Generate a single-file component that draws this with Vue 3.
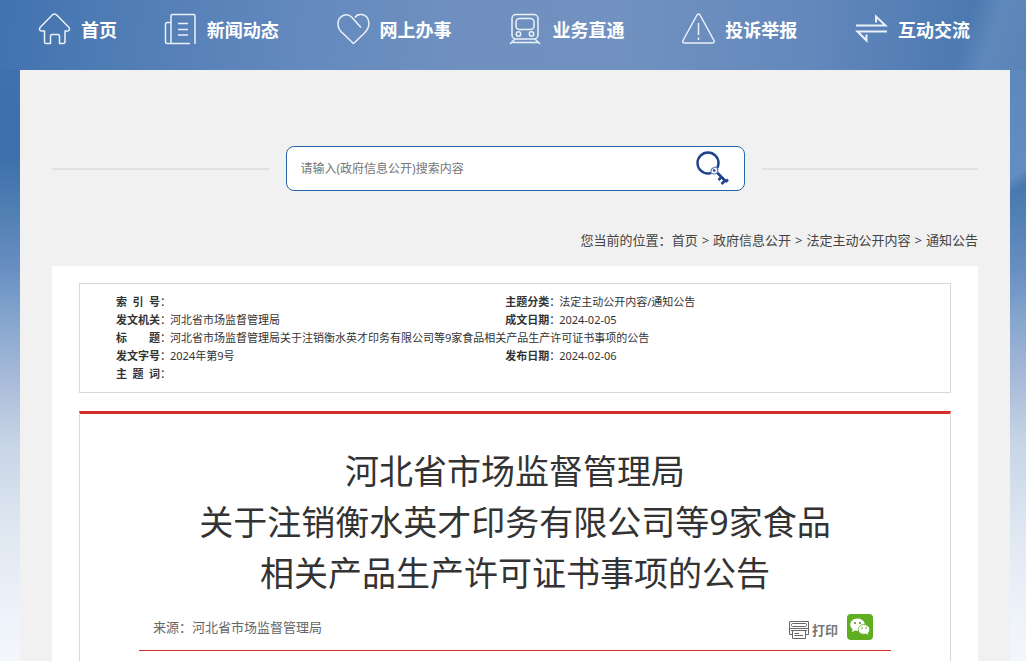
<script setup>
import { ref } from 'vue'

const keyword = ref('')

const nav = [
  { name: 'home', label: '首页' },
  { name: 'news', label: '新闻动态' },
  { name: 'service', label: '网上办事' },
  { name: 'business', label: '业务直通' },
  { name: 'report', label: '投诉举报' },
  { name: 'exchange', label: '互动交流' },
]

const crumbs = ['首页', '政府信息公开', '法定主动公开内容', '通知公告']

const meta = [
  [{ label: '索引号', value: '' }, { label: '主题分类', value: '法定主动公开内容/通知公告' }],
  [{ label: '发文机关', value: '河北省市场监督管理局' }, { label: '成文日期', value: '2024-02-05' }],
  [{ label: '标题', value: '河北省市场监督管理局关于注销衡水英才印务有限公司等9家食品相关产品生产许可证书事项的公告' }],
  [{ label: '发文字号', value: '2024年第9号' }, { label: '发布日期', value: '2024-02-06' }],
  [{ label: '主题词', value: '' }],
]

const titleLines = ['河北省市场监督管理局', '关于注销衡水英才印务有限公司等9家食品', '相关产品生产许可证书事项的公告']
</script>

<template>
  <div class="page">
    <nav class="nav">
      <a v-for="item in nav" :key="item.name" class="nav-item" href="#">
        <svg class="nav-icon" viewBox="0 0 33 34" aria-hidden="true">
          <g v-if="item.name === 'home'">
            <path d="M14.500 1.800Q16.500 .3 18.500 1.800L31 14.500Q32.300 17.600 29.500 18H27V28.500Q27 30.500 25 30.500H21.500V23Q21.500 21.500 20 21.500H14Q12.500 21.500 12.500 23V30.500H8Q6.500 30.500 6.500 29V18H3.500Q.7 17.600 2 14.500Z" />
          </g>
          <g v-else-if="item.name === 'news'">
            <path d="M31 31V3Q31 1.500 29.500 1.500H8.500Q7 1.500 7 3V30" />
            <path d="M7 9.500H3.500Q1.500 9.500 1.500 11.500V28.500Q1.500 30.500 3.500 30.500H26" />
            <path d="M14 10.500H24M14 16.500H24M14 22H24" />
          </g>
          <g v-else-if="item.name === 'service'">
            <path d="M24 14.500L15 4.500C10-.5 1 2 1 11C1 15 3 18 6 20.500L16.500 30.500L27.500 20C35 12 32 3 25 1.600C22 1 19.500 2 18 4.500" />
          </g>
          <g v-else-if="item.name === 'business'">
            <rect x="3" y="1.500" width="26" height="24.500" rx="4" />
            <rect x="7" y="5.500" width="18" height="11" rx="3.500" />
            <circle cx="9.500" cy="21" r="2.200" />
            <circle cx="22.500" cy="21" r="2.200" />
            <path d="M6 26L1 31M26 26L31 31M4 29.500H28" />
          </g>
          <g v-else-if="item.name === 'report'">
            <path d="M15 2Q16.500 -.2 18 2L32 27.500Q33 30 30 30H3Q0 30 1 27.500ZM16.500 10V22M16.500 24.500V27" />
          </g>
          <g v-else class="arrows">
            <path d="M1 12.500H30.500L21 3.500V9.500" />
            <path d="M32 18.500H2.500L11.500 27.500V21.500" />
          </g>
        </svg>
        <span>{{ item.label }}</span>
      </a>
    </nav>

    <main class="main">
      <div class="search-row">
        <form class="search" @submit.prevent>
          <input v-model="keyword" class="search-input" type="text" aria-label="搜索内容" placeholder="请输入(政府信息公开)搜索内容" />
          <button class="search-button" type="submit" aria-label="搜索">
            <svg width="34" height="36" viewBox="0 -2 34 36" fill="none" aria-hidden="true">
              <circle cx="13" cy="10" r="10.500" stroke="#1f428c" stroke-width="2.400" />
              <path d="M21.500 19L31 28.500M26.500 24L23.500 27M30 27.500L26.500 31M30.500 29L33 26.500" stroke="#1f428c" stroke-width="2.600" />
              <path d="M16 20Q15 15 21 14Q24 16 22 20Q19 22 16 20Z" fill="#fff" stroke="#5d79b1" stroke-width="1.200" />
              <circle cx="19.200" cy="17.500" r="1.300" fill="#1f428c" />
            </svg>
          </button>
        </form>
      </div>

      <div class="crumbs">
        <span>您当前的位置：</span>
        <template v-for="(crumb, i) in crumbs" :key="crumb">
          <span v-if="i" class="sep">&gt;</span>
          <a href="#">{{ crumb }}</a>
        </template>
      </div>

      <div class="sheet">
        <div class="meta">
          <table>
            <colgroup>
              <col class="col-label" /><col class="col-value" /><col class="col-label" /><col />
            </colgroup>
            <tbody>
              <tr v-for="(row, r) in meta" :key="r">
                <template v-for="cell in row" :key="cell.label">
                  <th scope="row"><span class="label">{{ cell.label.length < 4 ? cell.label.split('').join(' ') : cell.label }}</span><span class="colon">：</span></th>
                  <td :colspan="row.length === 1 ? 3 : 1">{{ cell.value }}</td>
                </template>
              </tr>
            </tbody>
          </table>
        </div>

        <article class="article">
          <h1><span v-for="line in titleLines" :key="line">{{ line }}</span></h1>
          <div class="source-row">
            <span class="source">来源：河北省市场监督管理局</span>
            <button class="print" type="button">
              <svg width="21" height="19" viewBox="0 0 21 19" fill="none" stroke="#666" aria-hidden="true">
                <path d="M3.500 13.500H.5V.5H19.500V13.500H17" />
                <rect x="2.500" y="2.500" width="15" height="3" rx="1" />
                <path d="M.5 7.500H19.500M2 9.500H18" />
                <path d="M3.500 10V17.500H16.500V10M5.500 12.500H10M5.500 14.500H14" />
              </svg>
              <span>打印</span>
            </button>
            <button class="wechat" type="button" aria-label="微信">
              <svg width="26" height="26" viewBox="0 0 26 26" aria-hidden="true">
                <rect width="26" height="26" rx="4" fill="#5fae20" />
                <path d="M10.500 4.500C6 4.500 3.200 7.500 3.200 10.700Q3.200 13.500 5.500 15.200L5 18L8 16.500Q11 17.200 14 16Q18 14 17.800 10.500C17.500 7 14.500 4.500 10.500 4.500Z" fill="#fff" />
                <path d="M16.700 10.500C13.500 10.500 11.200 12.700 11.200 15.500S13.500 20.300 17 20.300L19 20L21.500 21.500L21 19.200Q22.700 17.700 22.700 15.500C22.700 12.700 20 10.500 16.700 10.500Z" fill="#fff" stroke="#5fae20" stroke-width=".8" />
                <g fill="#4e8d22"><circle cx="8" cy="9" r="1" /><circle cx="13" cy="9" r="1" /><circle cx="15" cy="14" r=".8" /><circle cx="19" cy="14" r=".8" /></g>
              </svg>
            </button>
          </div>
        </article>
      </div>
    </main>
  </div>
</template>

<style>
body {
  margin: 0;
}
</style>

<style scoped>
.page {
  box-sizing: border-box;
  display: flex;
  flex-direction: column;
  min-height: 100vh;
  font-family: "Noto Sans", "Noto Sans CJK SC", sans-serif;
  color: #333;
  background:
    linear-gradient(108deg, transparent 40%, #5f89bb 64%, #5a84b7) right top / 100px 70px no-repeat,
    linear-gradient(94deg, #4172b0, #4f7cb4 11%, #6389be 29%, #6f90bf 44%, #7192c0 60%, #6388bc 79%, #4c79b1 94%) left top / 100% 70px no-repeat,
    linear-gradient(150deg, #5d88bb, #648dc1 84%, transparent 96%) right 70px / 20px 120px no-repeat,
    linear-gradient(180deg, #4071ae, #4070ab 160px, #507fb4 211px, #6b90c3 274px, #83a5cd 316px, #a8bad9 380px, #c8d5e6 443px, #dee7f1 527px, #eef2fa 612px, #f3f7fc 661px);
}

a {
  color: inherit;
  text-decoration: none;
}

button {
  padding: 0;
  border: 0;
  background: none;
  font: inherit;
  color: inherit;
  cursor: pointer;
}

svg {
  display: block;
}

.nav {
  display: grid;
  grid-template-columns: 115fr repeat(5, 173fr);
  height: 60px;
  margin: 0 27px 10px 20px;
}

.nav-item {
  display: flex;
  align-items: center;
  justify-content: center;
  gap: 10px;
  font-size: 18px;
  font-weight: 700;
  line-height: 26px;
  white-space: nowrap;
  color: #fff;
}

.nav-icon {
  width: 33px;
  height: 34px;
  fill: none;
  stroke: #eaf1f9;
  stroke-width: 1.500;
  stroke-linejoin: round;
}

.arrows {
  stroke-width: 2;
  stroke-linejoin: miter;
}

.main {
  flex: 1;
  display: flex;
  flex-direction: column;
  margin: 0 16px 0 20px;
  padding: 76px 32px 0;
  background: #f1f1f1;
}

.search-row {
  display: flex;
  align-items: center;
  gap: 17px;
}

.search-row::before,
.search-row::after {
  content: "";
  flex: 1;
  height: 2px;
  background: #e0e0e0;
}

.search {
  box-sizing: border-box;
  display: flex;
  align-items: center;
  width: 459px;
  height: 45px;
  padding: 0 15px 0 14px;
  border: 1px solid #2566ab;
  border-radius: 8px;
  background: #fff;
}

.search-input {
  flex: 1;
  min-width: 0;
  padding: 0;
  border: 0;
  outline: 0;
  background: none;
  font: 12px/20px "Noto Sans", "Noto Sans CJK SC", sans-serif;
}

.search-input::placeholder {
  color: #757575;
}

.crumbs {
  display: flex;
  justify-content: flex-end;
  margin: 39px 0 16px;
  font-size: 13px;
  line-height: 20px;
  color: #444;
}

.sep {
  padding: 0 4px;
}

.sheet {
  flex: 1;
  display: flex;
  flex-direction: column;
  padding: 17px 27px 0;
  background: #fff;
}

.meta {
  padding: 9px 36px;
  border: 1px solid #d9d9d9;
}

table {
  width: 100%;
  table-layout: fixed;
  border-collapse: collapse;
  font-size: 11px;
  line-height: 18px;
}

.col-label {
  width: 54px;
}

.col-value {
  width: 42%;
}

th,
td {
  height: 18px;
  padding: 0;
  text-align: left;
  white-space: nowrap;
}

.label {
  display: inline-block;
  width: 44px;
  text-align: justify;
  text-align-last: justify;
  vertical-align: top;
}

.colon {
  font-weight: 400;
}

.article {
  flex: 1;
  margin-top: 18px;
  padding: 32px 59px 20px;
  border: 1px solid #d9d9d9;
  border-top: 3px solid #d62d2d;
  border-bottom: 0;
}

h1 {
  margin: 0;
  font-size: 34px;
  font-weight: 400;
  line-height: 51px;
  text-align: center;
}

h1 span {
  display: block;
}

.source-row {
  display: flex;
  align-items: center;
  padding: 15px 18px 10px 14px;
  border-bottom: 1px solid #d62d2d;
  font-size: 13px;
  line-height: 20px;
  color: #666;
}

.source {
  flex: 1;
}

.print {
  display: flex;
  align-items: center;
  gap: 2px;
  margin: 6px 9px 0 0;
  font-weight: 700;
  color: #777;
}
</style>
